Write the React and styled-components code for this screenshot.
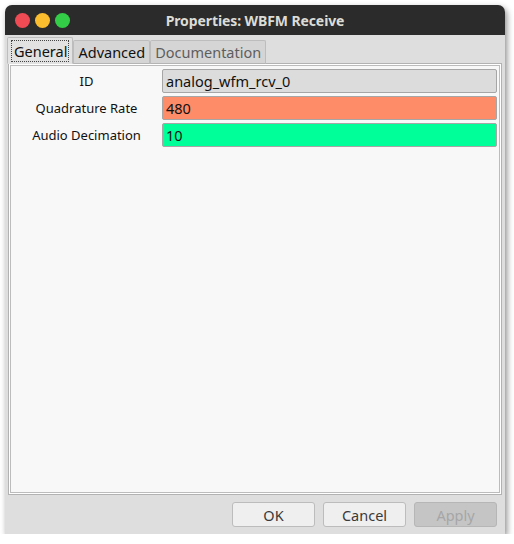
import React from "react";
import styled, { createGlobalStyle } from "styled-components";

const Global = createGlobalStyle`
  html, body { margin: 0; padding: 0; background: #ffffff; }
  body { font-family: "Noto Sans", "DejaVu Sans", sans-serif; }
`;

const Page = styled.div`
  padding: 5px 0 0 5px;
`;

const Window = styled.div`
  width: 500px;
  height: 529px;
  background: #dedede;
  border-radius: 7px 7px 0 0;
  box-shadow: 2px 3px 6px rgba(0, 0, 0, 0.45);
  display: flex;
  flex-direction: column;
  overflow: hidden;
`;

const TitleBar = styled.div`
  height: 30px;
  flex: none;
  background: #2b2b2b;
  display: flex;
  align-items: center;
  position: relative;
  padding-left: 10px;
  gap: 5px;
`;

const Light = styled.span`
  width: 15px;
  height: 15px;
  border-radius: 50%;
  background: ${(p) => p.$c};
`;

const Title = styled.div`
  position: absolute;
  left: 0;
  right: 0;
  top: 0;
  bottom: 0;
  display: flex;
  align-items: center;
  justify-content: center;
  color: #dcdcd6;
  font-weight: 700;
  font-size: 14px;
  letter-spacing: -0.1px;
`;

const Body = styled.div`
  flex: 1;
  display: flex;
  flex-direction: column;
  padding: 1px 3px 0 3px;
`;

const TabRow = styled.div`
  display: flex;
  align-items: flex-end;
  height: 28px;
  margin-bottom: -1px;
  position: relative;
  z-index: 1;
`;

const Tab = styled.div`
  height: ${(p) => (p.$active ? 27 : 24)}px;
  box-sizing: border-box;
  padding: ${(p) => (p.$active ? "3px 3px 2px 3px" : "0 4px")};
  margin-left: ${(p) => (p.$active ? "-1px" : "0")};
  background: ${(p) => (p.$active ? "#e2e2e2" : "#d5d5d5")};
  border: 1px solid #bdbdbd;
  border-bottom: ${(p) => (p.$active ? "1px solid #e2e2e2" : "1px solid #b4b4b4")};
  border-radius: 2px 2px 0 0;
  font-size: 14.5px;
  color: ${(p) => (p.$muted ? "#5e5e5e" : "#111")};
  display: flex;
  align-items: center;
`;

const Focus = styled.span`
  border: 1px dotted #444;
  padding: 0 1px 0 2px;
  line-height: 20px;
`;

const PanelOuter = styled.div`
  height: 432px;
  box-sizing: border-box;
  border: 1px solid #b2b2b2;
  background: #ffffff;
  padding: 1px;
  display: flex;
`;

const PanelInner = styled.div`
  flex: 1;
  border: 1px solid #bcbcbc;
  background: #f8f8f8;
  padding: 3px 2px 0 0;
`;

const Grid = styled.div`
  display: grid;
  grid-template-columns: 151px 1fr;
  grid-auto-rows: 24px;
  row-gap: 3px;
`;

const Label = styled.div`
  font-size: 13px;
  color: #111;
  display: flex;
  align-items: center;
  justify-content: center;
`;

const Field = styled.div`
  box-sizing: border-box;
  background: ${(p) => p.$bg};
  border: 1px solid #a6a6a6;
  border-radius: 2px;
  font-size: 14.5px;
  color: #111;
  display: flex;
  align-items: center;
  padding-left: 3px;
`;

const ButtonBar = styled.div`
  display: flex;
  justify-content: flex-end;
  gap: 8px;
  padding: 7px 5px 0 0;
`;

const Button = styled.div`
  width: 83px;
  height: 25px;
  box-sizing: border-box;
  border: 1px solid ${(p) => (p.$disabled ? "#b6b6b6" : "#bcbcbc")};
  border-radius: 3px;
  background: ${(p) => (p.$disabled ? "#c5c5c5" : "#efefef")};
  color: ${(p) => (p.$disabled ? "#a6a6a6" : "#3a3a3a")};
  font-size: 14.5px;
  display: flex;
  align-items: center;
  justify-content: center;
`;

const rows = [
  { label: "ID", value: "analog_wfm_rcv_0", bg: "#dcdcdc" },
  { label: "Quadrature Rate", value: "480", bg: "#ff8c69" },
  { label: "Audio Decimation", value: "10", bg: "#00ff99" },
];

export default function App() {
  return (
    <Page>
      <Global />
      <Window>
        <TitleBar>
          <Light $c="#ef4b55" />
          <Light $c="#fbbd2d" />
          <Light $c="#34cd47" />
          <Title>Properties: WBFM Receive</Title>
        </TitleBar>
        <Body>
          <TabRow>
            <Tab $active>
              <Focus>General</Focus>
            </Tab>
            <Tab>Advanced</Tab>
            <Tab $muted>Documentation</Tab>
          </TabRow>
          <PanelOuter>
            <PanelInner>
              <Grid>
                {rows.map((r) => (
                  <React.Fragment key={r.label}>
                    <Label>{r.label}</Label>
                    <Field $bg={r.bg}>{r.value}</Field>
                  </React.Fragment>
                ))}
              </Grid>
            </PanelInner>
          </PanelOuter>
          <ButtonBar>
            <Button>OK</Button>
            <Button>Cancel</Button>
            <Button $disabled>Apply</Button>
          </ButtonBar>
        </Body>
      </Window>
    </Page>
  );
}
